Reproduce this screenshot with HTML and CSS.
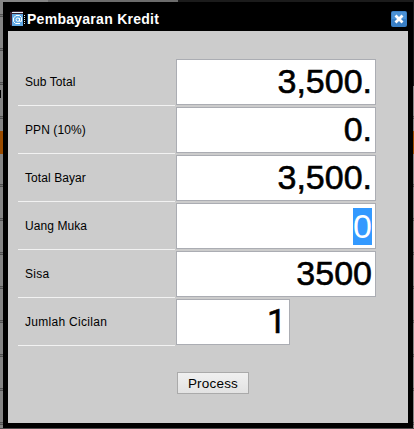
FILE: index.html
```
<!DOCTYPE html>
<html lang="id">
<head>
<meta charset="utf-8">
<title>Pembayaran Kredit</title>
<link rel="stylesheet" href="styles.css">
</head>
<body>
<main class="dialog">
  <header class="titlebar">
    <svg class="book" width="16" height="16" viewBox="0 0 16 16">
      <path d="M0 1H2L3 0H13V15H2L0 14Z" fill="#351c30"/>
      <path d="M2 1H13V2H2Z" fill="#e4eef5"/>
      <path d="M2 3H13V15H2Z" fill="#62a9e5"/>
      <path d="M14.500 4V14" stroke="#d5e6ee" stroke-dasharray="1 1"/>
      <path d="M9.500 7V10.300H11.500V6.500L9.500 4.500H6L3.500 7V10.500L5.500 12.500H10M9.500 8.700A1.700 1.700 0 1 1 6.100 8.700A1.700 1.700 0 1 1 9.500 8.700" fill="none" stroke="#fff"/>
    </svg>
    <h1>Pembayaran Kredit</h1>
    <svg class="close" width="16" height="16" viewBox="0 0 16 16">
      <rect width="16" height="16" rx="2" fill="#397fc5"/>
      <path d="M1 1H15V8H1Z" fill="#4b91d4"/>
      <path d="M4.500 4.500L11.500 11.500M11.500 4.500L4.500 11.500" stroke="#fff" stroke-width="2.800"/>
    </svg>
  </header>
  <form class="form">
    <div class="row"><label>Sub Total</label><div class="field">3,500.</div></div>
    <div class="row"><label>PPN (10%)</label><div class="field">0.</div></div>
    <div class="row"><label>Total Bayar</label><div class="field">3,500.</div></div>
    <div class="row"><label>Uang Muka</label><div class="field light"><span class="selected">0</span></div></div>
    <div class="row"><label class="wide">Sisa</label><div class="field">3500</div></div>
    <div class="row"><label class="wide">Jumlah Cicilan</label><div class="field short">1</div></div>
    <button type="button">Process</button>
  </form>
</main>
</body>
</html>
```
FILE: styles.css
```
* { box-sizing: border-box; }
body {
  margin: 0;
  width: 414px;
  height: 429px;
  padding: 2px 1px 1px 3px;
  overflow: hidden;
  background:
    linear-gradient(#1b1b1b, #1b1b1b) 178px 0 / 236px 2px no-repeat,
    linear-gradient(#6c6c6c, #6c6c6c) 48px 0 / 130px 2px no-repeat,
    linear-gradient(#1b1b1b, #1b1b1b) 413px 0 / 1px 86px no-repeat,
    linear-gradient(#9b4c00, #9b4c00) 0 131px / 414px 23px no-repeat,
    linear-gradient(#000, #000) 0 90px / 1px 8px no-repeat,
    linear-gradient(#514d4e, #514d4e) 0 428px / 414px 1px no-repeat,
    repeating-linear-gradient(#858585 0 14px, #555 14px 15px, #777 15px 16px, #555 16px 17px, #858585 17px 34px);
  font-family: "Liberation Sans", Arial, sans-serif;
}
.dialog { height: 426px; padding: 0 5px 5px; background: #000; }
.titlebar { display: flex; height: 29px; align-items: center; color: #fff; padding: 5px 1px 0 2px; }
.titlebar h1 { flex: 1; margin: 0 0 0 1px; font-size: 14px; line-height: 16px; letter-spacing: .27px; }
.form { height: 392px; background: #ccc; padding: 27px 0 0 10px; }
.row { display: flex; height: 48px; }
.row label { width: 157px; height: 48px; margin-right: 1px; padding: 1px 0 0 7px; border-bottom: 1px solid #f2f2f2; font-size: 12px; line-height: 46px; letter-spacing: .08px; }
.row label.wide { letter-spacing: .3px; }
.field { width: 200px; height: 46px; margin-top: 1px; padding: 0 3px; border: 1px solid #abadb3; background: #fff; text-align: right; font-size: 34px; line-height: 43px; -webkit-text-stroke: .6px #000; }
.short { width: 114px; font-family: Roboto, "Liberation Sans", sans-serif; }
.light { -webkit-text-stroke: 0; }
.selected { display: inline-block; height: 37px; margin-top: 4px; line-height: 36px; color: #fff; background: #3399ff; }
button { display: block; margin: 26px 0 0 159px; width: 72px; height: 22px; padding: 1px 0 0; border: 1px solid #aaa; background: linear-gradient(#f0f0f0, #e2e2e2); font: 13.5px/18px "Liberation Sans", Arial, sans-serif; letter-spacing: .2px; color: #000; }
```
